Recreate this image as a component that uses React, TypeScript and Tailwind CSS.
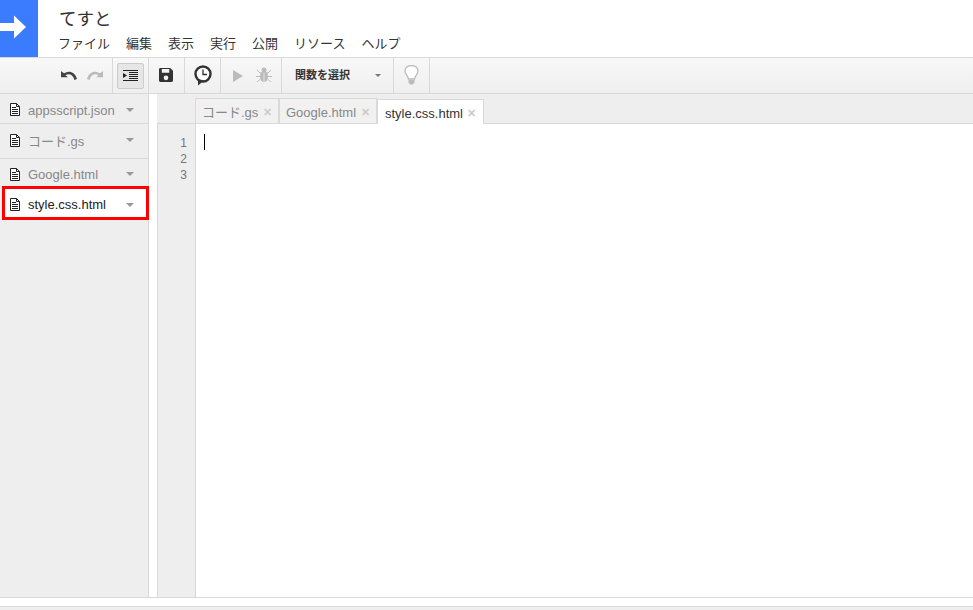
const menus = ['ファイル', '編集', '表示', '実行', '公開', 'リソース', 'ヘルプ'];

const files = [
  { name: 'appsscript.json', row: 'h-[30px] border-b border-[#d9d9d9] pt-[2px]', text: 'mt-[2px]' },
  { name: 'コード.gs', row: 'h-[35px] border-b border-[#d9d9d9] pb-[2px]', text: 'mt-[4px]' },
  { name: 'Google.html', row: 'h-[27px] pt-[3px]', text: 'mt-[2px]' },
];

function FileIcon({ className }: { className?: string }) {
  return (
    <svg width="10" height="13" viewBox="0 0 10 13" className={`shrink-0 ${className ?? ''}`}>
      <path d="M0.5 0.5H6.5L9.5 3.5V12.5H0.5Z" fill="#fff" stroke="#222" />
      <path d="M6.5 0.5V3.5H9.5M2 4.5H6M2 6.5H8M2 8.5H8M2 10.5H8" fill="none" stroke="#222" />
    </svg>
  );
}

function Caret({ className }: { className?: string }) {
  return <span className={`h-0 w-0 border-x-[4px] border-t-[4px] border-x-transparent border-t-[#999] ${className ?? ''}`} />;
}

function ToolCell({ className, children }: { className: string; children?: React.ReactNode }) {
  return <div className={`flex h-full items-center border-r border-[#d9d9d9] ${className}`}>{children}</div>;
}

function Tab({ name, active, width }: { name: string; active?: boolean; width: string }) {
  return (
    <div
      className={`flex h-[25px] items-center border border-b-0 border-[#d9d9d9] pt-[3px] ${width} ${
        active ? 'relative top-px gap-[4px] bg-white pl-[7px] text-[#333]' : 'gap-[5px] bg-[#f1f1f1] pl-[6px] text-[#888]'
      }`}
    >
      <span className="whitespace-nowrap text-[13px]">{name}</span>
      <span className="text-[11px] font-bold leading-none text-[#ccc]">✕</span>
    </div>
  );
}

export default function App() {
  return (
    <div
      className="flex h-[610px] w-[973px] flex-col overflow-hidden bg-white"
      style={{ fontFamily: '"Liberation Sans", "Noto Sans CJK JP", sans-serif' }}
    >
      <header className="flex h-[58px] shrink-0 items-start border-b border-[#d9d9d9]">
        <div className="flex h-[57px] w-[38px] items-center bg-[#3b7cff]">
          <svg width="26" height="24" viewBox="0 0 26 24" className="mb-[4px]">
            <path d="M0 8H14V0.500L26 12L14 23.500V16H0Z" fill="#fff" />
          </svg>
        </div>
        <div className="pl-[20px]">
          <div className="pl-px pt-[8px] text-[17.5px] leading-[22px] text-[#333]">てすと</div>
          <nav className="mt-[4px] flex gap-[16px] text-[13px] leading-[20px] text-[#333]">
            {menus.map((m) => (
              <span key={m}>{m}</span>
            ))}
          </nav>
        </div>
      </header>

      <div className="flex h-[36px] shrink-0 border-b border-[#d9d9d9] bg-gradient-to-b from-[#f8f8f8] to-[#efefef]">
        <ToolCell className="w-[113px] justify-end gap-[10px] pr-[9px]">
          <svg width="16" height="9" viewBox="0 0 16 10" preserveAspectRatio="none">
            <path d="M0 0V7H7L4.500 4.800C7.500 2.600 11.500 3.400 13.500 10L16 9C14 1 8 -1 3 2.500Z" fill="#444" />
          </svg>
          <svg width="16" height="9" viewBox="0 0 16 10" preserveAspectRatio="none">
            <path d="M16 0V7H9L11.500 4.800C8.500 2.600 4.500 3.400 2.500 10L0 9C2 1 8 -1 13 2.500Z" fill="#bbb" />
          </svg>
        </ToolCell>
        <ToolCell className="w-[36px] justify-center">
          <div className="flex h-[26px] w-[27px] items-center justify-center rounded-[2px] border border-[#ccc] bg-[#e6e6e6]">
            <svg width="15" height="11" viewBox="0 0 15 11">
              <path d="M0 .5H15M6 2.500H15M6 4.500H15M6 6.500H15M6 8.500H15M0 10.500H15" stroke="#222" />
              <path d="M0 3L4 5.500L0 8Z" fill="#222" />
            </svg>
          </div>
        </ToolCell>
        <ToolCell className="w-[36px] justify-center pr-px">
          <svg width="14" height="14" viewBox="0 0 15 15" className="mb-[2px]">
            <path
              fillRule="evenodd"
              d="M0 1.500A1.500 1.500 0 0 1 1.500 0H12L15 3V13.500A1.500 1.500 0 0 1 13.500 15H1.500A1.500 1.500 0 0 1 0 13.500ZM3 1V5H11V1ZM7.500 8A2.500 2.500 0 1 0 7.500 13A2.500 2.500 0 1 0 7.500 8Z"
              fill="#333"
            />
          </svg>
        </ToolCell>
        <ToolCell className="w-[36px] justify-center">
          <svg width="18" height="21" viewBox="0 0 18 21">
            <circle cx="9" cy="9" r="7.500" fill="#fff" stroke="#333" strokeWidth="2.400" />
            <path d="M4 14L4 20.500L10 15.500Z" fill="#333" />
            <path d="M9 4.500V9.500H13" fill="none" stroke="#333" strokeWidth="1.300" />
          </svg>
        </ToolCell>
        <ToolCell className="w-[61px] gap-[13px] pl-[12px]">
          <svg width="10" height="12" viewBox="0 0 10 12">
            <path d="M0 0L10 6L0 12Z" fill="#bbb" />
          </svg>
          <svg width="16" height="16" viewBox="0 0 16 16" className="mb-[2px]">
            <ellipse cx="8" cy="9.500" rx="4" ry="5.500" fill="#bbb" />
            <circle cx="8" cy="3" r="2.500" fill="#bbb" />
            <path d="M1 3L4 6H12L15 3M0 9.500H16M1 15L4 12.500M15 15L12 12.500" fill="none" stroke="#bbb" />
            <path d="M8 5.500V15" stroke="#efefef" strokeWidth=".8" />
          </svg>
        </ToolCell>
        <ToolCell className="w-[112px] justify-between pl-[13px] pr-[12px]">
          <span className="text-[11px] font-bold text-[#333]">関数を選択</span>
          <span className="h-0 w-0 border-x-[3px] border-t-[3px] border-x-transparent border-t-[#777]" />
        </ToolCell>
        <ToolCell className="w-[36px] justify-center">
          <svg width="15" height="20" viewBox="0 0 15 20" className="mb-[2px]">
            <path d="M4.500 14C4 10.500 1 9.500 1 6A6.500 5.500 0 0 1 14 6C14 9.500 11 10.500 10.500 14Z" fill="#fff" stroke="#bbb" strokeWidth="1.300" />
            <path d="M4.500 15H10.500V17.500L9 19.500H6L4.500 17.500Z" fill="#bbb" />
          </svg>
        </ToolCell>
      </div>

      <main className="flex h-[504px] shrink-0 border-b border-[#d9d9d9]">
        <aside className="w-[149px] shrink-0 border-r border-[#d9d9d9] bg-[#eee]">
          {files.map((f) => (
            <div key={f.name} className={`flex items-center gap-[8px] pl-[10px] pr-[14px] text-[13px] text-[#888] ${f.row}`}>
              <FileIcon />
              <span className={`flex-1 whitespace-nowrap ${f.text}`}>{f.name}</span>
              <Caret />
            </div>
          ))}
          <div className="ml-[2px] flex h-[34px] w-[147px] items-center gap-[8px] border-[3px] border-[#f00] bg-white pl-[5px] pr-[12px] text-[13px] text-[#222]">
            <FileIcon className="mt-[2px]" />
            <span className="mt-[4px] flex-1 whitespace-nowrap">style.css.html</span>
            <Caret className="mt-[3px]" />
          </div>
        </aside>

        <div className="w-[8px] shrink-0" />

        <section className="flex min-w-0 flex-1 flex-col">
          <div className="flex h-[30px] shrink-0 items-end border-b border-[#d9d9d9] bg-[#eee] pl-[38px]">
            <Tab name="コード.gs" width="w-[84px]" />
            <Tab name="Google.html" width="w-[98px]" />
            <Tab name="style.css.html" active width="w-[107px]" />
          </div>
          <div className="flex min-h-0 flex-1">
            <div className="w-[39px] shrink-0 border-x border-[#d9d9d9] bg-[#eee] pr-[8px] pt-[11px] text-right text-[12px] leading-[16px] text-[#777]">
              <div>1</div>
              <div>2</div>
              <div>3</div>
            </div>
            <div className="flex-1 pl-[8px] pt-[10px]">
              <div className="h-[16px] w-px bg-black" />
            </div>
          </div>
        </section>
      </main>

      <div className="h-[9px] shrink-0 border-b border-[#d9d9d9] bg-white" />
      <div className="h-[3px] shrink-0 bg-[#eee]" />
    </div>
  );
}
